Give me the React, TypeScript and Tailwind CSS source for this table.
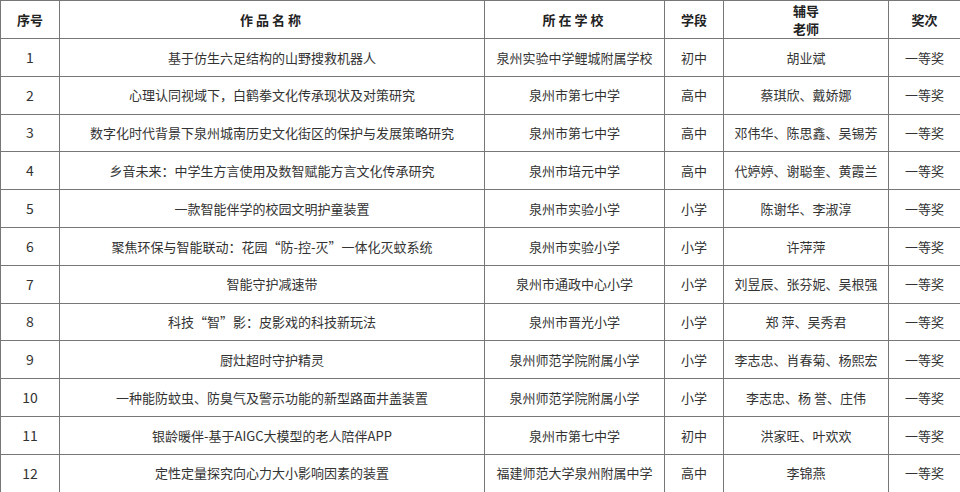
const rows = [
  ['1', '基于仿生六足结构的山野搜救机器人', '泉州实验中学鲤城附属学校', '初中', '胡业斌'],
  ['2', '心理认同视域下，白鹤拳文化传承现状及对策研究', '泉州市第七中学', '高中', '蔡琪欣、戴娇娜'],
  ['3', '数字化时代背景下泉州城南历史文化街区的保护与发展策略研究', '泉州市第七中学', '高中', '邓伟华、陈思鑫、吴锡芳'],
  ['4', '乡音未来：中学生方言使用及数智赋能方言文化传承研究', '泉州市培元中学', '高中', '代婷婷、谢聪奎、黄霞兰'],
  ['5', '一款智能伴学的校园文明护童装置', '泉州市实验小学', '小学', '陈谢华、李淑淳'],
  ['6', '聚焦环保与智能联动：花园“防-控-灭”一体化灭蚊系统', '泉州市实验小学', '小学', '许萍萍'],
  ['7', '智能守护减速带', '泉州市通政中心小学', '小学', '刘昱辰、张芬妮、吴根强'],
  ['8', '科技“智”影：皮影戏的科技新玩法', '泉州市晋光小学', '小学', '郑 萍、吴秀君'],
  ['9', '厨灶超时守护精灵', '泉州师范学院附属小学', '小学', '李志忠、肖春菊、杨熙宏'],
  ['10', '一种能防蚊虫、防臭气及警示功能的新型路面井盖装置', '泉州师范学院附属小学', '小学', '李志忠、杨 誉、庄伟'],
  ['11', '银龄暖伴-基于AIGC大模型的老人陪伴APP', '泉州市第七中学', '初中', '洪家旺、叶欢欢'],
  ['12', '定性定量探究向心力大小影响因素的装置', '福建师范大学泉州附属中学', '高中', '李锦燕'],
]

const cell = 'border border-[#777] text-center align-middle px-1'

export default function App() {
  return (
    <div
      className="w-[960px] h-[492px] bg-white text-[#333] text-[13px]"
      style={{ fontFamily: '"Noto Sans CJK SC", "Noto Sans", sans-serif' }}
    >
      <table className="w-[960px] h-[492px] border-collapse table-fixed">
        <colgroup>
          <col className="w-[59px]" />
          <col className="w-[425px]" />
          <col className="w-[180px]" />
          <col className="w-[59px]" />
          <col className="w-[165px]" />
          <col className="w-[72px]" />
        </colgroup>
        <thead>
          <tr className="h-[38px] font-bold text-[#222]">
            <th className={cell}>序号</th>
            <th className={`${cell} tracking-[3px]`}>作品名称</th>
            <th className={`${cell} tracking-[3px]`}>所在学校</th>
            <th className={cell}>学段</th>
            <th className={cell}>
              <div className="leading-[18px]">辅导</div>
              <div className="leading-[18px]">老师</div>
            </th>
            <th className={cell}>奖次</th>
          </tr>
        </thead>
        <tbody>
          {rows.map((r) => (
            <tr key={r[0]} className="h-[37.8px]">
              <td className={`${cell} text-[14px]`}>{r[0]}</td>
              <td className={cell}>{r[1]}</td>
              <td className={cell}>{r[2]}</td>
              <td className={cell}>{r[3]}</td>
              <td className={cell}>{r[4]}</td>
              <td className={cell}>一等奖</td>
            </tr>
          ))}
        </tbody>
      </table>
    </div>
  )
}
